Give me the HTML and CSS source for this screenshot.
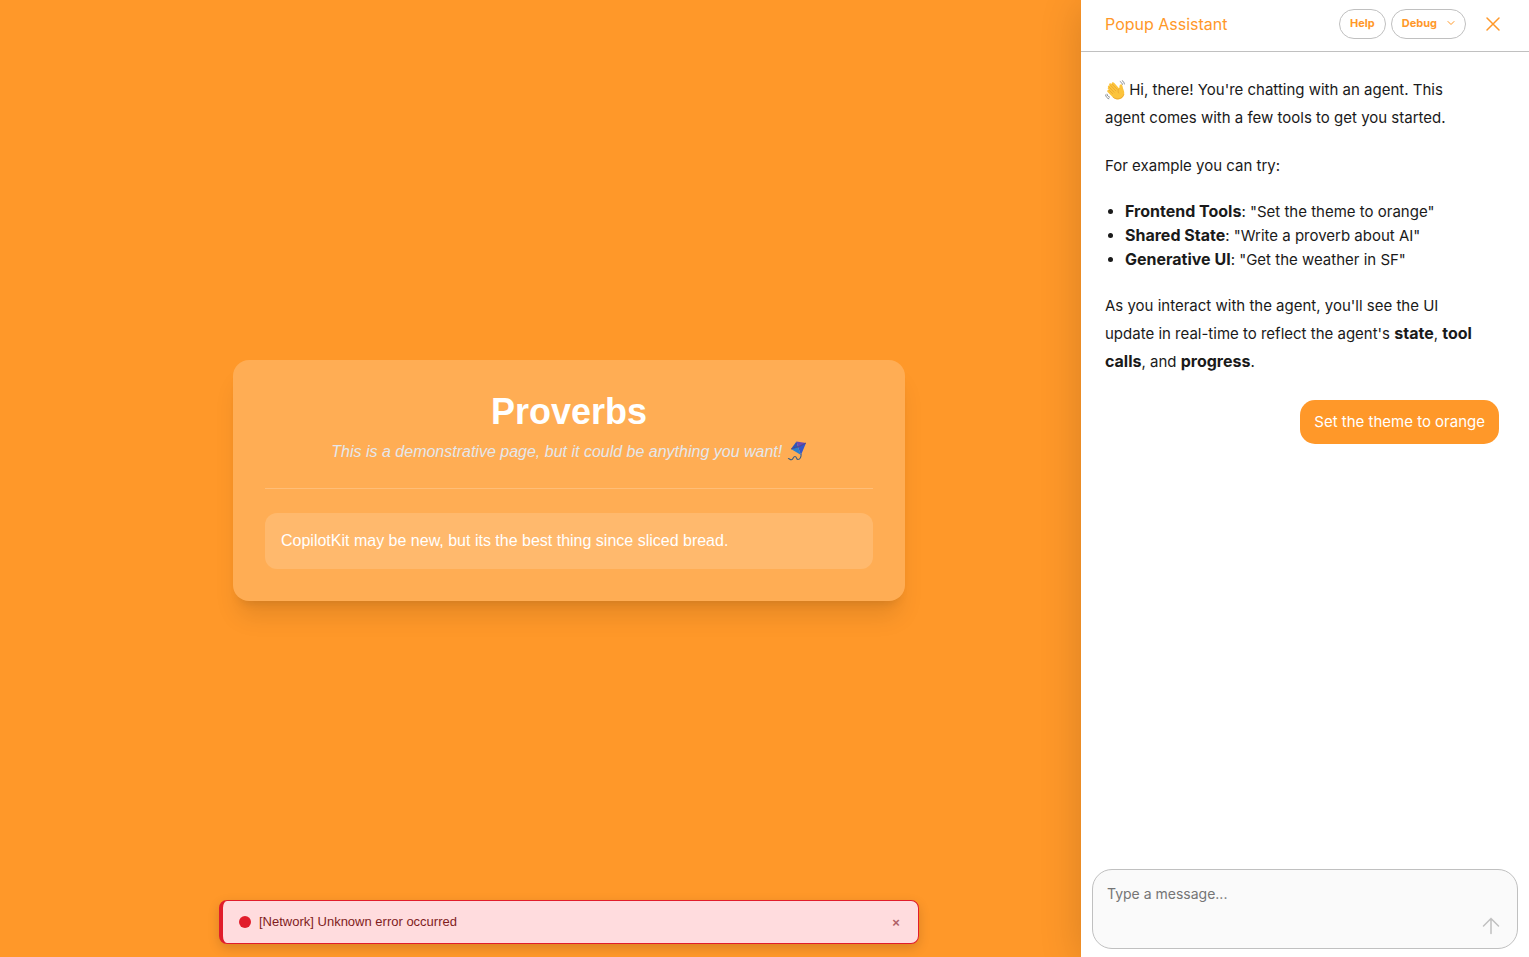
FILE: index.html
```
<!DOCTYPE html>
<html lang="en">
<head>
    <meta charset="UTF-8">
    <meta name="viewport" content="width=device-width, initial-scale=1.0">
    <title>Proverbs</title>
    <link rel="stylesheet" href="styles.css">
</head>
<body>
    <main class="page">
        <section class="card">
            <h1 class="title">Proverbs</h1>
            <p class="subtitle">This is a demonstrative page, but it could be anything you want!
                <svg class="kite" viewBox="0 0 20 20" role="img" aria-label="kite">
                    <path d="M14 13 C14.5 15.5 13 18.5 11 18.5 C9 18.5 10 15.5 8 15.5 C6 15.5 6.5 18.5 4.5 18.8 C2.5 19 2.5 17 1 17.5" fill="none" stroke="#3f5f82" stroke-width="1.1"/>
                    <path d="M9.5 .5 L11 6 L4 8 Z" fill="#2f55b8"/>
                    <path d="M9.5 .5 L19 2 L11 6 Z" fill="#6a4bb5"/>
                    <path d="M19 2 L14 14 L11 6 Z" fill="#3557c9"/>
                    <path d="M4 8 L11 6 L14 14 Z" fill="#2b7fd0"/>
                    <path d="M19 2 L11 6 L4 8" fill="none" stroke="#3a2a78" stroke-width=".6"/>
                </svg>
            </p>
            <hr class="divider">
            <div class="proverb">CopilotKit may be new, but its the best thing since sliced bread.</div>
        </section>

        <div class="toast" role="alert">
            <span class="toast-dot"></span>
            <span class="toast-text">[Network] Unknown error occurred</span>
            <button class="toast-close" aria-label="Dismiss">×</button>
        </div>
    </main>

    <aside class="sidebar">
        <header class="header">
            <div class="header-title">Popup Assistant</div>
            <div class="header-actions">
                <button class="pill">Help</button>
                <button class="pill">Debug
                    <svg class="chevron" viewBox="0 0 8 8"><path d="M1 2.5 L4 5.5 L7 2.5"/></svg>
                </button>
            </div>
            <button class="close" aria-label="Close">
                <svg viewBox="0 0 16 16"><path d="M2 2 L14 14 M14 2 L2 14"/></svg>
            </button>
        </header>

        <div class="messages">
            <div class="assistant">
                <p><svg class="wave" viewBox="0 0 20 20" role="img" aria-label="waving hand">
                    <g transform="matrix(-1 0 0 1 20 0)" fill="none" stroke="#7d8288" stroke-width=".9" stroke-linecap="round">
                        <path d="M4.8 1.6 C3.6 2.2 2.8 3.2 2.6 4.4 M2.8 .6 C1.6 1.4 .8 2.6 .6 4"/>
                    </g>
                    <path d="M3.2 7.4 C2.2 5.9 3.8 4.7 4.9 5.9 L4.4 5.2 C3.4 3.4 5.3 2.4 6.5 3.8 L6.8 4 C6.4 2.2 8.2 1.6 9.3 3 L14.2 8.6 C14.7 7 13.9 5 15.6 4.4 C17 4 17.6 6 18 8.2 C18.6 10.4 19.8 12 19 14.8 C18.2 17.6 15.8 19.6 12.8 19.5 C10.2 19.4 8.4 18 6.6 16 L2.6 12 C1.4 10.5 2.8 9.2 4.2 10.3 L3.2 9.2 C2.6 8.5 2.6 7.8 3.2 7.4 Z" fill="#fcc43c"/>
                    <path d="M4.4 7.4 L9 12.2 M5.6 5.4 L10.8 10.8 M7.4 4.4 L12.2 9.4 M4.2 10.3 L7.6 13.6 M8.4 17.4 C11.6 20.2 17.4 19 18.9 14.6 M14.2 8.6 C12.6 10.2 12.8 11.6 13.6 13" fill="none" stroke="#e8a02c" stroke-width=".7" stroke-linecap="round"/>
                    <path d="M2 14.2 C2.2 15.6 3.2 16.8 4.6 17.2 M.6 15 C1 17 2.2 18.4 3.8 18.8" fill="none" stroke="#7d8288" stroke-width=".9" stroke-linecap="round"/>
                </svg> Hi, there! You're chatting with an agent. This agent comes with a few tools to get you started.</p>
                <p>For example you can try:</p>
                <ul>
                    <li><strong>Frontend Tools</strong>: "Set the theme to orange"</li>
                    <li><strong>Shared State</strong>: "Write a proverb about AI"</li>
                    <li><strong>Generative UI</strong>: "Get the weather in SF"</li>
                </ul>
                <p>As you interact with the agent, you'll see the UI update in real-time to reflect the agent's <strong>state</strong>, <strong>tool calls</strong>, and <strong>progress</strong>.</p>
            </div>
            <div class="user">Set the theme to orange</div>
        </div>

        <form class="composer">
            <textarea class="input" placeholder="Type a message..." aria-label="Message"></textarea>
            <button class="send" type="button" aria-label="Send">
                <svg viewBox="0 0 24 24"><path d="M12 19.5 V4.5 M4.5 12 L12 4.5 L19.5 12"/></svg>
            </button>
        </form>
    </aside>
</body>
</html>
```
FILE: styles.css
```
* {
    box-sizing: border-box;
}

body {
    margin: 0;
    display: flex;
    height: 100vh;
    overflow: hidden;
    background-color: #ff9829;
    font-family: "Liberation Sans", Arial, sans-serif;
    font-size: 16px;
    line-height: 24px;
}

button,
textarea {
    font-family: inherit;
    background: none;
    border: none;
    padding: 0;
}

button {
    cursor: pointer;
}

h1,
p,
ul {
    margin: 0;
}

/* main page */
.page {
    position: relative;
    flex: 1;
    display: flex;
    justify-content: center;
    align-items: center;
    padding: 4px 0 0 57px;
}

.card {
    width: 100%;
    max-width: 672px;
    padding: 32px;
    border-radius: 16px;
    background-color: #ffad54;
    box-shadow: 0 20px 25px -5px rgba(0, 0, 0, 0.1), 0 8px 10px -6px rgba(0, 0, 0, 0.1);
    color: #fff;
}

.title {
    margin-bottom: 8px;
    font-size: 36px;
    line-height: 40px;
    text-align: center;
}

.subtitle {
    color: #e5e7eb;
    font-style: italic;
    text-align: center;
}

.kite {
    width: 20px;
    height: 20px;
    vertical-align: -4px;
}

.divider {
    margin: 24px 0;
    border: none;
    border-top: 1px solid #ffbe78;
}

.proverb {
    padding: 16px;
    border-radius: 12px;
    background-color: #ffb96d;
}

/* error toast */
.toast {
    position: absolute;
    left: 57px;
    right: 0;
    bottom: 13px;
    display: flex;
    align-items: center;
    gap: 8px;
    width: 700px;
    max-width: 90%;
    margin: 0 auto;
    padding: 11px 16px;
    border: 1px solid #e11d2b;
    border-left-width: 4px;
    border-radius: 8px;
    background-color: #ffdcde;
    box-shadow: 0 4px 12px rgba(0, 0, 0, 0.15);
    color: #7f1d1d;
    font-size: 13px;
    line-height: 20px;
}

.toast-dot {
    width: 12px;
    height: 12px;
    border-radius: 50%;
    background-color: #e11d2b;
}

.toast-text {
    flex: 1;
}

.toast-close {
    width: 12px;
    color: #b06066;
    font-size: 13px;
    font-weight: bold;
}

/* chat sidebar */
.sidebar {
    position: relative;
    display: flex;
    flex-direction: column;
    width: 448px;
    background-color: #fff;
    box-shadow: 0 5px 40px rgba(0, 0, 0, 0.16);
    color: #1a1a1a;
    font-family: Inter, "Liberation Sans", sans-serif;
}

.header {
    display: flex;
    align-items: center;
    height: 52px;
    padding: 0 28px 4px 24px;
    border-bottom: 1px solid #c0c0c0;
    color: #ff9829;
}

.header-title {
    flex: 1;
}

.header-actions {
    display: flex;
    gap: 5px;
}

.pill {
    display: flex;
    align-items: center;
    gap: 10px;
    height: 30px;
    padding: 0 10px 1px;
    border: 1px solid #c0c0c0;
    border-radius: 15px;
    color: #ff9829;
    font-size: 11px;
    font-weight: 700;
}

.chevron {
    width: 8px;
    height: 8px;
}

.close {
    display: flex;
    margin-left: 19px;
    color: #ff9829;
}

.close svg {
    width: 16px;
    height: 16px;
}

.chevron path,
.close path,
.send path {
    fill: none;
    stroke: currentColor;
    stroke-linecap: round;
}

.close path,
.send path {
    stroke-width: 1.5;
}

.messages {
    flex: 1;
    display: flex;
    flex-direction: column;
    gap: 24px;
    padding: 24px 30px 24px 24px;
    font-size: 15px;
}

.assistant {
    max-width: 380px;
}

.assistant p {
    line-height: 28px;
}

.assistant p + p,
.assistant ul {
    margin-top: 20px;
}

.assistant ul {
    margin-bottom: 20px;
    padding-left: 20px;
}

.assistant strong {
    font-size: 16px;
    line-height: 16px;
}

.wave {
    width: 20px;
    height: 20px;
    vertical-align: -5px;
}

.user {
    align-self: flex-end;
    padding: 8px 14px;
    border-radius: 15px;
    background-color: #ff9829;
    color: #fff;
    line-height: 28px;
}

.composer {
    display: flex;
    align-items: flex-end;
    height: 80px;
    margin: 0 11px 8px;
    padding: 12px 14px 10px;
    border: 1px solid #c0c0c0;
    border-radius: 20px;
    background-color: #fafafa;
}

.input {
    flex: 1;
    align-self: stretch;
    resize: none;
    outline: none;
    font-size: 14px;
    line-height: 24px;
}

.input::placeholder {
    color: #757575;
}

.send {
    display: flex;
    color: #c0c0c0;
}

.send svg {
    width: 24px;
    height: 24px;
}
```
